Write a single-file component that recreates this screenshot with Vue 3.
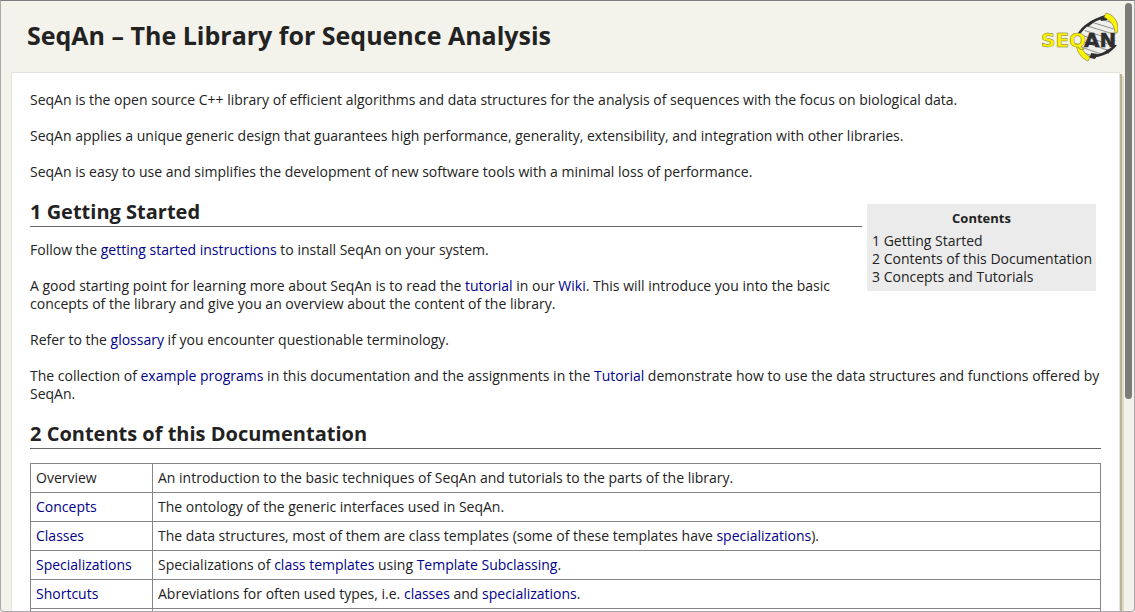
<script setup>
const toc = ['1 Getting Started', '2 Contents of this Documentation', '3 Concepts and Tutorials']

const rows = [
  { name: 'Overview', parts: [{ t: 'An introduction to the basic techniques of SeqAn and tutorials to the parts of the library.' }] },
  { name: 'Concepts', link: true, parts: [{ t: 'The ontology of the generic interfaces used in SeqAn.' }] },
  {
    name: 'Classes',
    link: true,
    parts: [
      { t: 'The data structures, most of them are class templates (some of these templates have ' },
      { t: 'specializations', link: true },
      { t: ').' },
    ],
  },
  {
    name: 'Specializations',
    link: true,
    parts: [
      { t: 'Specializations of ' },
      { t: 'class templates', link: true },
      { t: ' using ' },
      { t: 'Template Subclassing', link: true },
      { t: '.' },
    ],
  },
  {
    name: 'Shortcuts',
    link: true,
    parts: [
      { t: 'Abreviations for often used types, i.e. ' },
      { t: 'classes', link: true },
      { t: ' and ' },
      { t: 'specializations', link: true },
      { t: '.' },
    ],
  },
  { name: '', parts: [{ t: '' }] },
]
</script>

<template>
  <div class="window">
    <header class="head">
      <h1>SeqAn – The Library for Sequence Analysis</h1>
      <svg class="logo" width="78" height="52" viewBox="0 0 78 52" role="img" aria-label="SeqAn">
        <defs>
          <clipPath id="lens"><path d="M42 42C37 24 48 10 66 4C76 12 77 30 74 35C70 41 62 45 50 46Z" /></clipPath>
        </defs>
        <path d="M42 42C37 24 48 10 66 4C76 12 77 30 74 35C70 41 62 45 50 46Z" fill="#efefeb" />
        <g clip-path="url(#lens)" stroke="#8e8e8c" stroke-width="1">
          <path d="M54 6L80 14M48 10L80 20M44 14L80 25M40 18L80 31M38 23L80 37M38 29L76 42M38 35L70 46M38 40L62 48" />
        </g>
        <path d="M38 22C42 15 52 8 65 4L67 7C56 9 47 14 41 22Z" fill="#2e2d30" />
        <path d="M77 34C72 41 64 46 50 47L48 45C59 44 68 40 74 34Z" fill="#2e2d30" />
        <path d="M60 6L68 4L67 9L61 10ZM46 14L51 10L53 12L48 16ZM51 42L58 43L55 48L50 47ZM66 39L72 38L68 43Z" fill="#2e2d30" />
        <path d="M66 2C75 4 80 13 77 22L75 22C75 15 71 10 64 6Z" fill="#fff500" stroke="#77763a" stroke-width="0.6" />
        <path d="M36 33C37 41 41 47 48 50L50 46C45 43 42 39 41 34Z" fill="#fff500" stroke="#77763a" stroke-width="0.6" />
        <text class="seq" x="1" y="36">SEQ</text>
        <text class="an" x="44" y="36">AN</text>
      </svg>
    </header>

    <main class="sheet">
      <p>SeqAn is the open source C++ library of efficient algorithms and data structures for the analysis of sequences with the focus on biological data.</p>
      <p>SeqAn applies a unique generic design that guarantees high performance, generality, extensibility, and integration with other libraries.</p>
      <p>SeqAn is easy to use and simplifies the development of new software tools with a minimal loss of performance.</p>

      <nav class="toc" aria-labelledby="toc-title">
        <h3 id="toc-title">Contents</h3>
        <ul>
          <li v-for="(item, i) in toc" :key="item"><a :href="'#s' + (i + 1)">{{ item }}</a></li>
        </ul>
      </nav>

      <h2 id="s1">1 Getting Started</h2>
      <p>Follow the <a href="#">getting started instructions</a> to install SeqAn on your system.</p>
      <p>A good starting point for learning more about SeqAn is to read the <a href="#">tutorial</a> in our <a href="#">Wiki</a>. This will introduce you into the basic concepts of the library and give you an overview about the content of the library.</p>
      <p>Refer to the <a href="#">glossary</a> if you encounter questionable terminology.</p>
      <p>The collection of <a href="#">example programs</a> in this documentation and the assignments in the <a href="#">Tutorial</a> demonstrate how to use the data structures and functions offered by SeqAn.</p>

      <h2 id="s2">2 Contents of this Documentation</h2>
      <table>
        <tbody>
          <tr v-for="row in rows" :key="row.name">
            <th scope="row"><a v-if="row.link" href="#">{{ row.name }}</a><template v-else>{{ row.name }}</template></th>
            <td><template v-for="(part, i) in row.parts" :key="i"><a v-if="part.link" href="#">{{ part.t }}</a><template v-else>{{ part.t }}</template></template></td>
          </tr>
        </tbody>
      </table>
    </main>
    <div class="thumb"></div>
  </div>
</template>

<style>
body {
  background: #f4f3eb;
}
</style>

<style scoped>
.window {
  position: relative;
  box-sizing: border-box;
  height: 100vh;
  overflow: hidden;
  border: 1px solid #aaa8aa;
  border-top-color: #7f7b7f;
  border-radius: 0 0 4px 4px;
  background: #f4f3eb;
  color: #222;
  font: 14px/18px "Open Sans", "Noto Sans", sans-serif;
}
.head {
  display: flex;
  justify-content: space-between;
  align-items: center;
  box-sizing: border-box;
  height: 71px;
  padding: 0 16px 0 26px;
}
h1 {
  margin: 0;
  padding-bottom: 4px;
  font-size: 25px;
  line-height: 32px;
}
.logo {
  display: block;
}
.logo text {
  font-family: "DejaVu Sans", sans-serif;
  font-size: 20px;
  font-weight: bold;
}
.seq {
  fill: #fff500;
  stroke: #77763a;
  stroke-width: 0.5;
}
.an {
  fill: #2e2d30;
  stroke: #2e2d30;
  stroke-width: 0.5;
}
.sheet {
  margin: 0 14px 0 10px;
  padding: 18px 18px 0;
  border: 1px solid #e4e3dd;
  background: #fff;
  box-shadow: 2px 2px 0 #bab496, 4px 4px 0 #dedac7;
}
p {
  margin: 0 0 18px;
}
a {
  color: #00008b;
  text-decoration: none;
}
h2 {
  display: flow-root;
  margin: 0 0 14px;
  padding-bottom: 1px;
  border-bottom: 1px solid #666;
  font-size: 20px;
  line-height: 26px;
}
.toc {
  float: right;
  box-sizing: border-box;
  width: 229px;
  margin: 5px;
  padding: 5px;
  background: #ebebeb;
  white-space: nowrap;
}
.toc h3 {
  margin: 0 0 5px;
  font-size: 13px;
  line-height: 18px;
  text-align: center;
}
.toc ul {
  margin: 0;
  padding: 0;
  list-style: none;
}
.toc a {
  color: #222;
}
table {
  width: 100%;
  border-collapse: collapse;
}
th,
td {
  height: 18px;
  padding: 5px;
  border: 1px solid #868686;
  text-align: left;
  font-weight: normal;
}
th {
  width: 111px;
}
.thumb {
  position: absolute;
  top: 2px;
  right: 2px;
  width: 7px;
  height: 396px;
  border-radius: 4px;
  background: #7b7c77;
}
</style>
